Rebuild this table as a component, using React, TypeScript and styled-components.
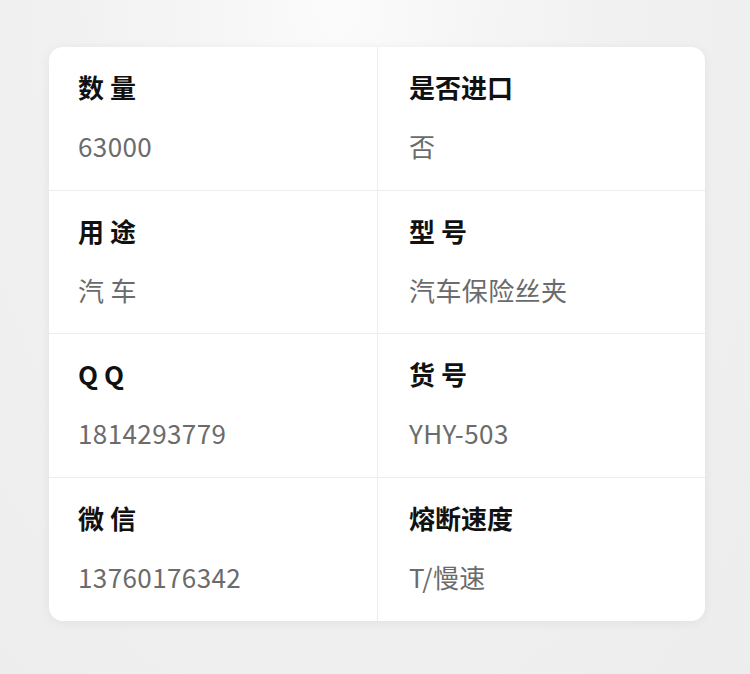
import React from 'react';
import styled, {createGlobalStyle} from 'styled-components';

const GlobalStyle = createGlobalStyle`
  html, body {
    margin: 0;
    padding: 0;
  }
  body {
    background: radial-gradient(ellipse at 45% 0%, #fbfbfb 0%, #f1f1f1 45%, #ededed 100%);
    min-height: 674px;
    font-family: 'Noto Sans CJK SC', 'Noto Sans', sans-serif;
  }
`;

type Item = {label: string; value: string};

const items: Item[] = [
  {label: '数 量', value: '63000'},
  {label: '是否进口', value: '否'},
  {label: '用 途', value: '汽 车'},
  {label: '型 号', value: '汽车保险丝夹'},
  {label: 'Q Q', value: '1814293779'},
  {label: '货 号', value: 'YHY-503'},
  {label: '微 信', value: '13760176342'},
  {label: '熔断速度', value: 'T/慢速'},
];

const App: React.FC = () => {
  return (
    <>
      <GlobalStyle />
      <Page>
        <Card>
          {items.map((item, i) => (
            <Cell key={item.label} $right={i % 2 === 1} $last={i >= items.length - 2}>
              <Label>{item.label}</Label>
              <Value>{item.value}</Value>
            </Cell>
          ))}
        </Card>
      </Page>
    </>
  );
};
export default App;

const Page = styled.div`
  padding: 47px 45px 53px 49px;
`;

const Card = styled.div`
  display: grid;
  grid-template-columns: 328px 328px;
  background: #fff;
  border-radius: 14px;
  overflow: hidden;
  box-shadow: 0 2px 12px rgba(0, 0, 0, 0.06);
`;

const Cell = styled.div<{$right: boolean; $last: boolean}>`
  height: 143.5px;
  box-sizing: border-box;
  padding: 22px 30px 0 ${(p) => (p.$right ? '31px' : '29px')};
  border-left: ${(p) => (p.$right ? '1px solid #ededed' : 'none')};
  border-bottom: ${(p) => (p.$last ? 'none' : '1px solid #ededed')};
`;

const Label = styled.div`
  font-size: 26px;
  line-height: 36px;
  font-weight: 700;
  color: #111;
  white-space: pre;
`;

const Value = styled.div`
  margin-top: 23px;
  font-size: 26px;
  line-height: 36px;
  letter-spacing: 0.4px;
  color: #6b6b6b;
  white-space: pre;
`;
